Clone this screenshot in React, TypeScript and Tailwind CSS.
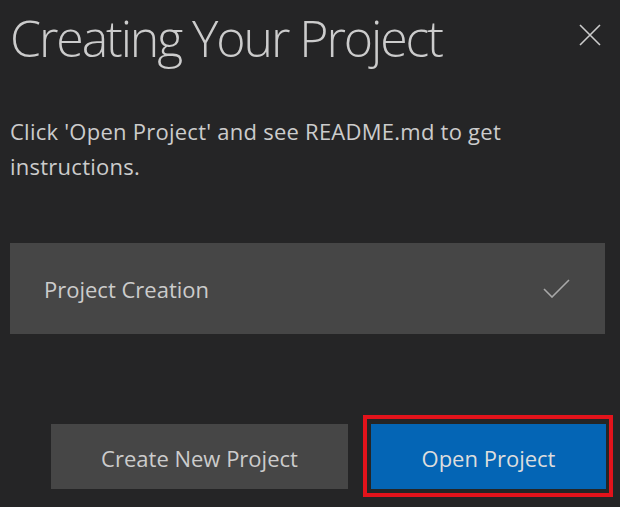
export default function App() {
  return (
    <div className="w-[620px] h-[507px] overflow-hidden bg-[#252526] pl-[10px] pr-[7px] font-['Open_Sans',sans-serif] text-[#cccccc]">
      <div className="flex justify-between items-start">
        <h1 className="pt-[8px] text-[50px] leading-[60px] font-light tracking-[-2.1px]">
          Creating Your Project
        </h1>
        <button className="mt-[24px] mr-[12px] text-[#cccccc]" aria-label="Close">
          <svg width="22" height="22" viewBox="0 0 22 22" fill="none">
            <path d="M1 1L21 21M21 1L1 21" stroke="currentColor" strokeWidth="1.6" />
          </svg>
        </button>
      </div>

      <p className="mt-[46px] max-w-[560px] text-[22px] leading-[35px] tracking-[0.25px]">
        Click 'Open Project' and see README.md to get instructions.
      </p>

      <div className="mt-[59px] w-[595px] h-[91px] bg-[#464646] flex items-center justify-between pl-[34px] pr-[35px]">
        <span className="pt-[2px] text-[22px] leading-[35px]">Project Creation</span>
        <svg width="27" height="19" viewBox="0 0 27 19" fill="none" className="text-[#a8a8a8]">
          <path d="M1 10L9 18L26 1" stroke="currentColor" strokeWidth="1.6" />
        </svg>
      </div>

      <div className="mt-[81px] flex justify-end items-center gap-[15px]">
        <button className="w-[297px] h-[65px] pt-[4px] bg-[#464646] text-[22px] text-[#cccccc]">
          Create New Project
        </button>
        <div className="border-4 border-[#e3131b] pt-[5px] pr-[3px] pb-[4px] pl-[4px]">
          <button className="block w-[235px] h-[65px] pt-[4px] bg-[#0465b5] text-[22px] text-[#dddddd]">
            Open Project
          </button>
        </div>
      </div>
    </div>
  );
}
